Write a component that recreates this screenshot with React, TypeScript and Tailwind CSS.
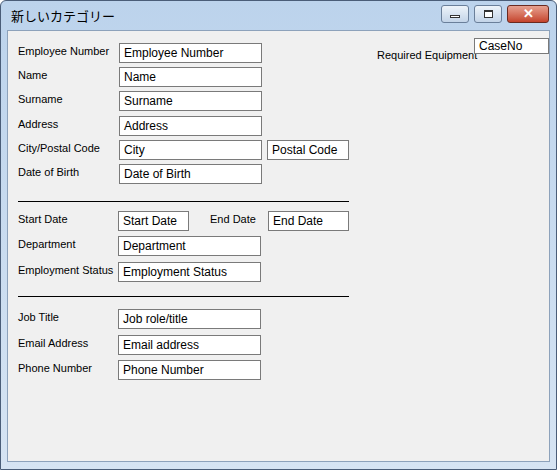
import React from 'react';

const font = { fontFamily: '"Liberation Sans", "Noto Sans CJK JP", sans-serif' };

function Field({ text, w = 'w-[143px]' }: { text: string; w?: string }) {
  return (
    <div className={`${w} h-[20px] border border-[#7a7a7a] bg-white px-[4px] text-[12px] leading-[18px] text-black whitespace-nowrap overflow-hidden`}>
      {text}
    </div>
  );
}

function Row({ label, children, lw = 'w-[101px]', mb = 'mb-[4px]' }: { label: string; children: React.ReactNode; lw?: string; mb?: string }) {
  return (
    <div className={`flex items-start h-[20px] ${mb}`}>
      <div className={`${lw} text-[11px] leading-[14px] pt-[1px] text-black whitespace-nowrap`}>{label}</div>
      {children}
    </div>
  );
}

export default function App() {
  return (
    <div style={font} className="w-[557px] h-[470px] bg-white">
      <div className="w-[557px] h-[470px] rounded-t-[6px] border border-[#4a5d78] bg-gradient-to-b from-[#bcd3ec] to-[#d6e4f3] flex flex-col">
        <div className="h-[29px] flex items-center justify-between pl-[10px] pr-[7px]">
          <span className="text-[13px] text-black" style={{ fontFamily: '"Noto Sans CJK JP", sans-serif' }}>新しいカテゴリー</span>
          <div className="flex gap-[5px] -mt-[4px]">
            <div className="w-[28px] h-[18px] rounded-[3px] border border-[#6a7f9a] bg-gradient-to-b from-[#eef4fa] to-[#c3d4e8] flex items-center justify-center">
              <div className="w-[10px] h-[3px] border border-[#333] bg-white mt-[5px]" />
            </div>
            <div className="w-[28px] h-[18px] rounded-[3px] border border-[#6a7f9a] bg-gradient-to-b from-[#eef4fa] to-[#c3d4e8] flex items-center justify-center">
              <div className="w-[9px] h-[8px] border border-[#333] border-t-2 bg-white" />
            </div>
            <div className="w-[42px] h-[18px] rounded-[3px] border border-[#6b2a20] bg-gradient-to-b from-[#e6a090] to-[#c4432c] flex items-center justify-center text-white text-[13px] font-bold leading-none">
              ✕
            </div>
          </div>
        </div>
        <div className="mx-[6px] mb-[7px] flex-1 border border-[#8da2bb] bg-[#f0f0f0] flex pl-[10px] pt-[12px]">
          <div className="w-[331px]">
            <Row label="Employee Number"><Field text="Employee Number" /></Row>
            <Row label="Name"><Field text="Name" /></Row>
            <Row label="Surname" mb="mb-[5px]"><Field text="Surname" /></Row>
            <Row label="Address"><Field text="Address" /></Row>
            <Row label="City/Postal Code">
              <Field text="City" />
              <div className="ml-[5px]"><Field text="Postal Code" w="w-[82px]" /></div>
            </Row>
            <Row label="Date of Birth"><Field text="Date of Birth" /></Row>
            <div className="h-px bg-black mt-[17px] mb-[9px]" />
            <Row label="Start Date" lw="w-[100px]" mb="mb-[5px]">
              <Field text="Start Date" w="w-[71px]" />
              <div className="w-[79px] pl-[21px] text-[11px] leading-[14px] pt-[1px]">End Date</div>
              <Field text="End Date" w="w-[81px]" />
            </Row>
            <Row label="Department" lw="w-[100px]" mb="mb-[6px]"><Field text="Department" /></Row>
            <Row label="Employment Status" lw="w-[100px]"><Field text="Employment Status" /></Row>
            <div className="h-px bg-black mt-[14px] mb-[12px]" />
            <Row label="Job Title" lw="w-[100px]" mb="mb-[6px]"><Field text="Job role/title" /></Row>
            <Row label="Email Address" lw="w-[100px]" mb="mb-[5px]"><Field text="Email address" /></Row>
            <Row label="Phone Number" lw="w-[100px]"><Field text="Phone Number" /></Row>
          </div>
          <div className="ml-[28px] -mt-[5px] flex items-start">
            <span className="w-[97px] text-[11px] leading-[14px] mt-[10px] whitespace-nowrap">Required Equipment</span>
            <div className="w-[75px] h-[16px] border border-[#7a7a7a] bg-white px-[4px] text-[12px] leading-[14px]">CaseNo</div>
          </div>
        </div>
      </div>
    </div>
  );
}
